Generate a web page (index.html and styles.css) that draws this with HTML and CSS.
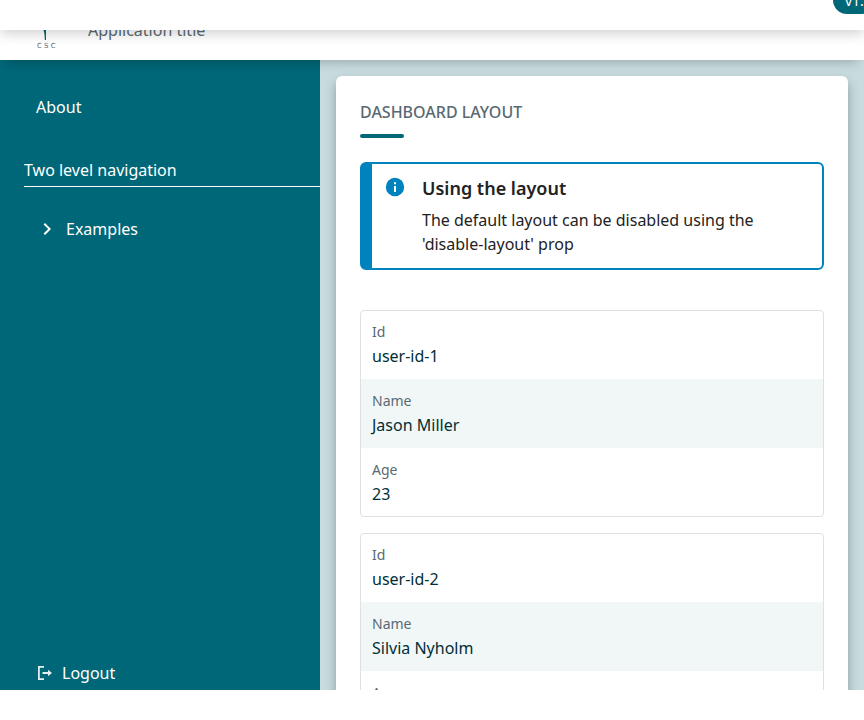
FILE: index.html
```html
<!DOCTYPE html>
<html lang="en">
<head>
<meta charset="utf-8">
<title>Dashboard layout</title>
<link rel="stylesheet" href="styles.css">
</head>
<body>
<header class="topbar"><span class="version">v1.0</span></header>
<div class="app">
  <div class="appbar">
    <svg class="logo" width="20" height="19" viewBox="0 0 20 19" aria-hidden="true"><path d="M7.500 0h2.500v10h-1.200L8.500 4z" fill="#006778"/></svg>
    <span class="brand">CSC</span>
    <span class="app-title">Application title</span>
  </div>
  <div class="body">
    <nav class="sidebar">
      <a class="nav-about">About</a>
      <div class="nav-group">Two level navigation</div>
      <a class="nav-sub"><svg width="24" height="24" viewBox="0 0 24 24" fill="#fff"><path d="M8.590 16.580 13.170 12 8.590 7.410 10 6l6 6-6 6z"/></svg>Examples</a>
      <a class="nav-logout"><svg width="18" height="18" viewBox="0 0 18 18" fill="none" stroke="#e3eff1" stroke-width="1.800"><path d="M8 2.900H2.900v12.200H8M6.500 9H13"/><path d="M12 5.800v6.400l4-3.200z" fill="#e3eff1" stroke="none"/></svg>Logout</a>
    </nav>
    <main class="content">
      <section class="card">
        <h1>DASHBOARD LAYOUT</h1>
        <div class="accent"></div>
        <div class="alert">
          <svg width="22" height="22" viewBox="0 0 22 22"><circle cx="11" cy="11" r="9.200" fill="#0083bd"/><path d="M10 6.200h2v2h-2zM10 10h2v6h-2z" fill="#fff"/></svg>
          <div class="alert-text"><h2>Using the layout</h2><p>The default layout can be disabled using the 'disable-layout' prop</p></div>
        </div>
        <dl class="record">
          <div><dt>Id</dt><dd>user-id-1</dd></div>
          <div><dt>Name</dt><dd>Jason Miller</dd></div>
          <div><dt>Age</dt><dd>23</dd></div>
        </dl>
        <dl class="record">
          <div><dt>Id</dt><dd>user-id-2</dd></div>
          <div><dt>Name</dt><dd>Silvia Nyholm</dd></div>
          <div><dt>Age</dt><dd>45</dd></div>
        </dl>
      </section>
    </main>
  </div>
</div>
</body>
</html>
```
FILE: styles.css
```css
* { box-sizing: border-box; }
html, body { height: 100%; overflow: hidden; }
body { margin: 0; background: #fff; font: 16px/24px "Noto Sans", sans-serif; color: #222; }
h1, h2, p, dl, dd { margin: 0; }
svg { display: block; flex: none; }

.topbar {
  position: relative;
  z-index: 3;
  height: 30px;
  background: #fff;
  box-shadow: 0 3px 14px rgba(0,0,0,.2);
}
.version {
  position: absolute;
  right: -12px;
  top: -14px;
  width: 43px;
  height: 28px;
  padding-left: 12px;
  border-radius: 14px;
  background: #006778;
  color: #fff;
  font-size: 14px;
  line-height: 29px;
}

.app { height: 660px; overflow: hidden; }
.appbar {
  position: relative;
  z-index: 2;
  display: flex;
  height: 30px;
  background: #fff;
  box-shadow: 0 8px 12px -6px rgba(0,0,0,.24);
}
.logo { margin-left: 36px; }
.brand { width: 26px; margin: 10px 0 0 -20px; padding-left: 1px; font: 7px/12px "DejaVu Sans", sans-serif; letter-spacing: 2.2px; color: #5a6971; }
.app-title { margin: -12px 0 0 26px; color: #5a6971; }

.body { display: flex; height: 630px; }
.sidebar { display: flex; flex: none; flex-direction: column; width: 320px; padding: 35px 0 5px 24px; background: #006778; color: #fff; }
.nav-about { padding-left: 12px; }
.nav-group { margin-top: 39px; height: 29px; border-bottom: 1px solid #fff; }
.nav-sub { display: flex; gap: 7px; margin-top: 30px; padding-left: 11px; }
.nav-logout { display: flex; align-items: center; gap: 8px; margin-top: auto; padding-left: 12px; }

.content { flex: 1; padding: 16px; background: #c8dce0; }
.card { height: 760px; padding: 24px; border-radius: 6px; background: #fff; box-shadow: 0 6px 12px rgba(0,0,0,.3); }
h1 { font-size: 16px; font-weight: 500; line-height: 24px; color: #5a6971; }
.accent { width: 44px; height: 4px; margin: 10px 0 24px; border-radius: 2px; background: #006778; }
.alert { display: flex; gap: 16px; height: 108px; padding: 12px 48px 0 12px; border: 2px solid #0083bd; border-left-width: 12px; border-radius: 6px; }
h2 { font-size: 18px; font-weight: 600; line-height: 24px; }
.alert-text p { margin-top: 8px; }
.record { margin-top: 16px; overflow: hidden; border: 1px solid #dde1e3; border-radius: 4px; }
.alert + .record { margin-top: 40px; }
.record div { height: 69px; padding: 10px 11px; }
.record div:first-child { height: 68px; padding-top: 9px; }
.record div:last-child { height: 68px; }
.record div:nth-child(even) { background: #f1f7f7; }
dt { font-size: 14px; color: #5a6971; }
dd { color: #002f36; }
```
